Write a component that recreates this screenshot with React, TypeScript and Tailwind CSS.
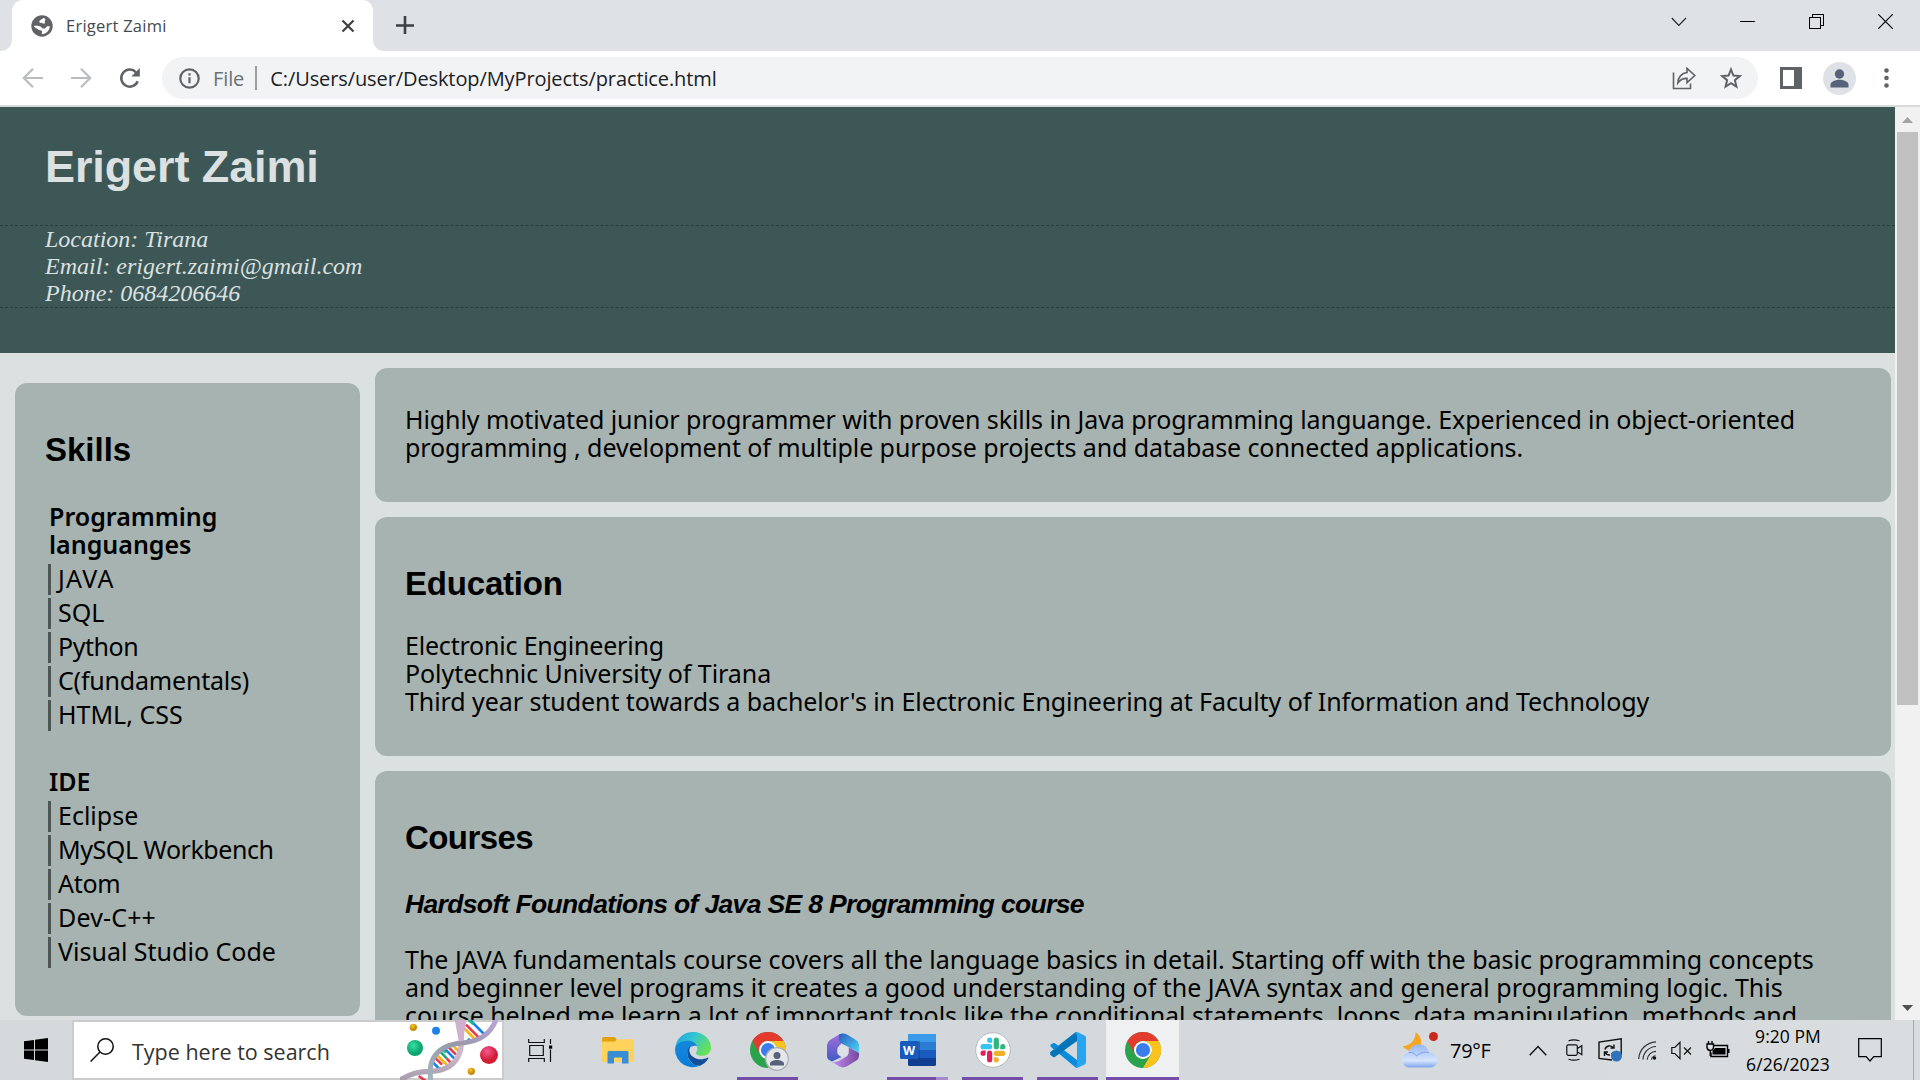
import type { ReactNode } from "react";

function GlobeIcon() {
  return (
    <svg className="h-[22px] w-[22px] shrink-0" viewBox="0 0 22 22">
      <circle cx="11" cy="11" r="10.7" fill="#5f6368" />
      <path
        d="M2.800 10.800c2.800-.3 5.200-.2 6.700.7 1.300.8 1.300 2 2.700 2.100 1.300 0 2.200-.2 2.700-1.200.4-1 1.700-1.300 4-1.100A8.200 8.200 0 0 1 11 19.200c-.6-1.700.8-2-.1-3.200-.8-1.100-2.700-.3-3.700-1.500-.9-1.300-3.200-1-4.400-3.700Z"
        fill="#fff"
      />
      <path d="M13 3c-1.500.1-1.800 1.300-3.100 1.700-1.400.5-1.900 1.800-1.300 2.700.7.9 2.100.2 3 .9.700.6 1.600.7 2.100-.1.500-.9-.3-1.600.4-2.400.5-.7.6-2-1.100-2.800Z" fill="#fff" />
    </svg>
  );
}

function Tab() {
  return (
    <div className="flex h-[51px] shrink-0 items-end">
      <div className="h-[51px] w-3 bg-white">
        <div className="h-full w-full rounded-br-[11px] bg-[#dee1e6]" />
      </div>
      <div className="flex h-[51px] w-[361px] items-center rounded-t-[11px] bg-white pl-[19px] pr-[17px]">
        <GlobeIcon />
        <span className="ml-[13px] grow font-['Open_Sans','Noto_Sans',sans-serif] text-[16.500px] leading-[22px] tracking-[0.24px] text-[#45484d]">
          Erigert Zaimi
        </span>
        <svg className="h-4 w-4" viewBox="0 0 16 16" stroke="#3c4043" strokeWidth="2.200">
          <path d="M2.500 2.500l11 11M13.500 2.500l-11 11" />
        </svg>
      </div>
      <div className="h-[51px] w-3 bg-white">
        <div className="h-full w-full rounded-bl-[11px] bg-[#dee1e6]" />
      </div>
    </div>
  );
}

function TabStrip() {
  return (
    <div className="flex h-[51px] shrink-0 bg-[#dee1e6]">
      <Tab />
      <svg className="ml-[11px] mt-4 h-[18px] w-[18px]" viewBox="0 0 18 18" stroke="#3c4043" strokeWidth="2.600">
        <path d="M9 0v18M0 9.500h18" />
      </svg>
      <div className="ml-auto flex h-[43px] items-center">
        <svg className="mr-[53px] h-[10px] w-4" viewBox="0 0 16 10" fill="none" stroke="#222" strokeWidth="1.100">
          <path d="M.8 1l7 7.500L15 1" />
        </svg>
        <svg className="mr-[54px] h-[15px] w-[15px]" viewBox="0 0 15 15" shapeRendering="crispEdges">
          <path d="M0 7h15v1H0z" />
        </svg>
        <svg className="mr-[54px] h-[15px] w-[15px]" viewBox="0 0 15 15" fill="none" stroke="#000" shapeRendering="crispEdges">
          <path d="M.5 3.500h11v11H.5zM3.500 3.500V.5h11v11h-3" />
        </svg>
        <svg className="mr-[27px] h-[15px] w-[15px]" viewBox="0 0 15 15" stroke="#000" strokeWidth="1.200">
          <path d="M0 0l15 15M15 0L0 15" />
        </svg>
      </div>
    </div>
  );
}

function Toolbar() {
  return (
    <div className="flex h-[56px] shrink-0 items-center border-b-2 border-[#d9dadc] bg-white pl-[22px]">
      <svg className="h-5 w-[22px]" viewBox="0 0 22 20" fill="none" stroke="#babcbe" strokeWidth="2.200">
        <path d="M21 10H2.500M11 .8L1.800 10l9.200 9.200" />
      </svg>
      <svg className="ml-[27px] h-5 w-[22px]" viewBox="0 0 22 20" fill="none" stroke="#babcbe" strokeWidth="2.200">
        <path d="M0 10h18.500M10 .8l9.200 9.200-9.200 9.200" />
      </svg>
      <svg className="ml-[26px] h-[22px] w-[22px]" viewBox="0 0 22 22" fill="none" stroke="#5f6368" strokeWidth="2.500">
        <path d="M18.700 14.200A8.500 8.500 0 1 1 17 5.300" />
        <path d="M20.800 1v8.500h-8.500z" fill="#5f6368" stroke="none" />
      </svg>
      <div className="ml-[21px] flex h-[42px] w-[1596px] items-center rounded-full bg-[#f1f3f4] font-['Open_Sans','Noto_Sans',sans-serif] text-[20px]">
        <svg className="ml-[17px] h-[21px] w-[21px]" viewBox="0 0 21 21" fill="none" stroke="#5f6368" strokeWidth="2.200">
          <circle cx="10.500" cy="10.500" r="9.200" />
          <path d="M10.500 9.300v6M10.500 5.300v2.200" />
        </svg>
        <span className="ml-[13px] pt-[2px] tracking-[-0.1px] text-[#6c7074]">File</span>
        <div className="ml-[11px] h-6 w-[2px] bg-[#9a9da1]" />
        <span className="ml-[13px] pt-[2px] tracking-[-0.1px] text-[#202124]">C:/Users/user/Desktop/MyProjects/practice.html</span>
        <svg className="ml-auto h-[23px] w-6" viewBox="0 0 24 23" fill="none" stroke="#5f6368" strokeWidth="1.600">
          <path d="M1.500 5.500v16h17v-5" />
          <path d="M15 1.300l7.800 7.200-7.800 7.200v-4.300C10.500 11.300 8 12.800 5.800 16 6 10.500 9.500 6 15 5.500z" />
        </svg>
        <svg className="ml-6 mr-4 h-[22px] w-[22px]" viewBox="0 0 22 22" fill="none" stroke="#5f6368" strokeWidth="2">
          <path d="M11 2.500l2.400 6 6.400.5-4.900 4.200 1.500 6.300-5.400-3.400-5.400 3.400 1.500-6.300L2.200 9l6.400-.5z" />
        </svg>
      </div>
      <svg className="ml-[22px] h-[22px] w-[22px]" viewBox="0 0 22 22" shapeRendering="crispEdges">
        <path fill="#5f6368" d="M0 0h22v22H0z" />
        <path fill="#fff" d="M3 3h11v16H3z" />
      </svg>
      <svg className="ml-[21px] h-[33px] w-[33px]" viewBox="0 0 33 33">
        <circle cx="16.500" cy="16.500" r="16.500" fill="#dee1e6" />
        <circle cx="16.500" cy="12" r="4.700" fill="#56627a" />
        <path d="M7.500 25.500v-2.800c0-3.200 5.500-5 9-5s9 1.800 9 5v2.800z" fill="#56627a" />
      </svg>
      <svg className="ml-[28px] h-[20px] w-[5px]" viewBox="0 0 5 20" fill="#5f6368">
        <circle cx="2.500" cy="2.500" r="2.300" />
        <circle cx="2.500" cy="10" r="2.300" />
        <circle cx="2.500" cy="17.500" r="2.300" />
      </svg>
    </div>
  );
}

function Header() {
  return (
    <header className="flex h-[246px] shrink-0 flex-col bg-[#3d5757] text-[#dbe0e0]">
      <h1 className="ml-[45px] mt-[35px] h-[83px] font-['Liberation_Sans',sans-serif] text-[45px] font-bold leading-[50px] tracking-[-0.1px]">
        Erigert Zaimi
      </h1>
      <address className="border-y border-dashed border-[#263f41] pl-[45px] font-['Liberation_Serif',serif] text-[24px] leading-[27px]">
        <p>Location: Tirana</p>
        <p>Email: erigert.zaimi@gmail.com</p>
        <p>Phone: 0684206646</p>
      </address>
    </header>
  );
}

function SkillGroup({ title, children }: { title: ReactNode; children: ReactNode }) {
  return (
    <div>
      <h3 className="ml-[4px] font-semibold leading-7">{title}</h3>
      <ul className="ml-[3px] mt-[6px] flex flex-col gap-[3px]">{children}</ul>
    </div>
  );
}

function Skill({ children, className = "" }: { children: ReactNode; className?: string }) {
  return (
    <li className={`h-[31px] border-l-[3px] border-[#4e5555] pl-[7px] leading-7 ${className}`}>{children}</li>
  );
}

function Sidebar() {
  return (
    <aside className="ml-[15px] mt-[30px] h-[633px] w-[345px] shrink-0 rounded-xl bg-[#a7b3b0] pl-[30px] pt-[49px]">
      <h2 className="font-['Liberation_Sans',sans-serif] text-[33px] font-bold leading-9">Skills</h2>
      <div className="mt-[34px] flex flex-col gap-9">
        <SkillGroup
          title={
            <>
              Programming
              <br />
              languanges
            </>
          }
        >
          <Skill className="tracking-[1.2px]">JAVA</Skill>
          <Skill>SQL</Skill>
          <Skill className="tracking-[-0.45px]">Python</Skill>
          <Skill className="tracking-[-0.2px]">C(fundamentals)</Skill>
          <Skill>HTML, CSS</Skill>
        </SkillGroup>
        <SkillGroup title="IDE">
          <Skill>Eclipse</Skill>
          <Skill className="tracking-[-0.45px]">MySQL Workbench</Skill>
          <Skill className="tracking-[-0.3px]">Atom</Skill>
          <Skill className="tracking-[0.15px]">Dev-C++</Skill>
          <Skill>Visual Studio Code</Skill>
        </SkillGroup>
      </div>
    </aside>
  );
}

function MainColumn() {
  return (
    <main className="ml-[15px] mt-[15px] flex w-[1516px] flex-col gap-[15px] whitespace-nowrap leading-7">
      <section className="h-[134px] rounded-xl bg-[#a7b3b0] pl-[30px] pt-[37px] tracking-[-0.085px]">
        <p>
          Highly motivated junior programmer with proven skills in Java programming languange. Experienced in object-oriented
          <br />
          programming , development of multiple purpose projects and database connected applications.
        </p>
      </section>
      <section className="h-[239px] rounded-xl bg-[#a7b3b0] pl-[30px] pt-[49px]">
        <h2 className="font-['Liberation_Sans',sans-serif] text-[33px] font-bold leading-9 tracking-[-0.2px]">Education</h2>
        <p className="mt-[29px] tracking-[-0.2px]">Electronic Engineering</p>
        <p className="tracking-[-0.07px]">Polytechnic University of Tirana</p>
        <p className="tracking-[-0.065px]">Third year student towards a bachelor's in Electronic Engineering at Faculty of Information and Technology</p>
      </section>
      <section className="h-[420px] rounded-xl bg-[#a7b3b0] pl-[30px] pt-[49px]">
        <h2 className="font-['Liberation_Sans',sans-serif] text-[33px] font-bold leading-9 tracking-[-0.58px]">Courses</h2>
        <h3 className="mt-[33px] font-['Liberation_Sans',sans-serif] text-[26.500px] font-bold italic leading-[30px] tracking-[-0.65px]">
          Hardsoft Foundations of Java SE 8 Programming course
        </h3>
        <p className="mt-[26px]">
          The JAVA fundamentals course covers all the language basics in detail. Starting off with the basic programming concepts
          <br />
          and beginner level programs it creates a good understanding of the JAVA syntax and general programming logic. This
        </p>
        <p className="tracking-[-0.04px]">
          course helped me learn a lot of important tools like the conditional statements, loops, data manipulation, methods and
        </p>
      </section>
    </main>
  );
}

function Scrollbar() {
  return (
    <div className="flex w-[25px] shrink-0 flex-col items-center bg-[#f1f1f1]">
      <svg className="mt-[10px] h-[6px] w-[11px]" viewBox="0 0 11 6" fill="#a3a3a3">
        <path d="M5.500 0L11 6H0z" />
      </svg>
      <div className="mt-[9px] h-[573px] w-[21px] bg-[#c1c1c1]" />
      <svg className="mb-[9px] mt-auto h-[6px] w-[11px]" viewBox="0 0 11 6" fill="#505050">
        <path d="M5.500 6L11 0H0z" />
      </svg>
    </div>
  );
}

function DnaArt() {
  return (
    <svg className="-my-[2px] h-[60px] w-[102px] shrink-0" viewBox="0 12 306 180">
      <defs>
        <linearGradient id="strandA" x1="0" y1="1" x2="1" y2="0">
          <stop offset="0" stopColor="#a3b5be" />
          <stop offset=".5" stopColor="#9798a8" />
          <stop offset="1" stopColor="#b8a4d6" />
        </linearGradient>
        <linearGradient id="strandB" x1="0" y1="0" x2="0" y2="1">
          <stop offset="0" stopColor="#cdaccd" />
          <stop offset=".6" stopColor="#cbbaca" />
          <stop offset="1" stopColor="#a79cae" />
        </linearGradient>
        <radialGradient id="greenBall" cx=".4" cy=".35">
          <stop offset="0" stopColor="#33e0a5" />
          <stop offset="1" stopColor="#0ea56f" />
        </radialGradient>
        <radialGradient id="redBall" cx=".4" cy=".3">
          <stop offset="0" stopColor="#f45a94" />
          <stop offset="1" stopColor="#d31d35" />
        </radialGradient>
        <radialGradient id="goldBall" cx=".4" cy=".3">
          <stop offset="0" stopColor="#fbc62d" />
          <stop offset="1" stopColor="#c58c08" />
        </radialGradient>
      </defs>
      <g strokeWidth="8" fill="none">
        <path stroke="#19a974" d="M118 104l22 23" />
        <path stroke="#e8384f" d="M140 127l14 15M144 92l24 24M104 124l22 22M198 26l18 18M216 44l26 26M56 180l20 14" />
        <path stroke="#1780ee" d="M100 140l18 19M134 98l32 33M212 14l46 46M204 68l10 10" />
        <path stroke="#f6b60c" d="M108 114l44 44M162 92l16 16M192 36l36 37" />
        <path stroke="#19b686" d="M128 100l10 10M206 12l14 12" />
      </g>
      <path d="M181 12c2 35 7 65 0 92-12 42-45 60-90 62-36 0-58 7-91 26" fill="none" stroke="url(#strandB)" strokeWidth="16" />
      <path d="M288 12c-18 43-48 62-95 68-49 3-79 20-93 47-11 18-11 37-8 65" fill="none" stroke="url(#strandA)" strokeWidth="15" />
      <path d="M164 12h35l-10 62-12 3z" fill="#cfb0cf" />
      <circle cx="40" cy="34" r="11" fill="url(#goldBall)" />
      <circle cx="108" cy="44" r="12" fill="#1f82e8" />
      <circle cx="45" cy="96" r="24" fill="url(#greenBall)" />
      <circle cx="267" cy="117" r="27" fill="url(#redBall)" />
      <circle cx="214" cy="166" r="11" fill="url(#goldBall)" />
    </svg>
  );
}

function ChromeLogo() {
  return (
    <svg className="h-9 w-9" viewBox="0 0 36 36">
      <circle cx="18" cy="18" r="18" fill="#2ba24c" />
      <path d="M18 0a18 18 0 0 1 15.590 9H18a9 9 0 0 0-7.790 13.500L2.410 9A18 18 0 0 1 18 0Z" fill="#e33b2e" />
      <path d="M33.590 9A18 18 0 0 1 18 36l7.790-13.500A9 9 0 0 0 18 9Z" fill="#fcc31e" />
      <circle cx="18" cy="18" r="9" fill="#fff" />
      <circle cx="18" cy="18" r="7.100" fill="#3b7ded" />
    </svg>
  );
}

function TaskCell({ children, width = "w-[61px]", active = false }: { children: ReactNode; width?: string; active?: boolean }) {
  return (
    <div className="flex h-full w-[75px] shrink-0 flex-col items-center">
      <div className={`flex h-[57px] items-center justify-center pt-[3px] ${active ? "w-[73px] bg-[#eef0f2]" : "w-full"}`}>{children}</div>
      <div className={`h-[3px] bg-[#744da9] ${width}`} />
    </div>
  );
}

function TaskIcons() {
  return (
    <div className="flex h-full">
      <div className="flex h-full w-[76px] items-center justify-center pr-[4px]">
        <svg className="h-[23px] w-[25px]" viewBox="0 0 25 23" fill="none" stroke="#111" strokeWidth="1.200">
          <path d="M.7 0v3.500h15.600V0M.7 23v-3.500h15.600V23M1.700 6.500h13.600v10H1.700zM22.500 0v5M22.500 10.500V23" />
          <path d="M21 6.500h3.200v3.200H21z" fill="#000" stroke="none" />
        </svg>
      </div>
      <TaskCell width="w-0">
        <svg className="h-7 w-8" viewBox="0 0 32 28">
          <path d="M0 2.500Q0 1 1.500 1H12q1.500 0 2 1.500L15.500 6H0z" fill="#e3a20b" />
          <path d="M0 5.500h13l2.500-2.300H30.500q1.500 0 1.500 1.500v20q0 1.300-1.500 1.300h-29Q0 26 0 24.500z" fill="#ffd25b" />
          <path d="M5.500 27.500V16.500q0-1.500 1.500-1.500h18q1.500 0 1.500 1.500v11H20v-6h-8v6z" fill="#398dd5" />
        </svg>
      </TaskCell>
      <TaskCell width="w-0">
        <svg className="h-9 w-9" viewBox="0 0 36 36">
          <defs>
            <linearGradient id="edgeTop" x1="0" y1="0" x2="1" y2=".5">
              <stop offset="0" stopColor="#1f9fe0" />
              <stop offset=".5" stopColor="#31c5d3" />
              <stop offset="1" stopColor="#66e158" />
            </linearGradient>
            <linearGradient id="edgeLeft" x1="0" y1="0" x2=".3" y2="1">
              <stop offset="0" stopColor="#1789d8" />
              <stop offset="1" stopColor="#0a7ddb" />
            </linearGradient>
          </defs>
          <path d="M.2 16C1.200 6 9 0 18 0c10.500 0 18 7.300 18 15.500 0 5-3.900 8.300-8.800 8.300-4.500 0-6.200-1.700-6.200-2.800 0-.8 1.400-1.500 1.400-4.200 0-3.700-4-7.300-10-7.300C6.500 9.500 1.500 12.500.2 16Z" fill="url(#edgeTop)" />
          <path d="M0 18C0 12 6 8.700 12.200 8.700c5 0 8.500 2 10 5.300-5-1.600-9.700 2.200-9.700 7.500 0 7 5.500 12 12.500 12.300A18 18 0 0 1 0 18Z" fill="url(#edgeLeft)" />
          <path d="M15.400 14.300c-2.700 2.200-3.400 5-2.900 8.200.8 6.500 6.500 11.400 12.500 11.300 3-1.300 6.500-4 8.300-7.300.4-.9-.2-1.100-.9-.7-8.300 3.900-16.900-.6-17.900-6.100-.3-2 .1-3.700.9-5.400Z" fill="#114f9b" />
        </svg>
      </TaskCell>
      <TaskCell>
        <div className="relative">
          <ChromeLogo />
          <svg className="absolute left-[15px] top-[15px] h-6 w-6" viewBox="0 0 24 24">
            <circle cx="12" cy="12" r="11.300" fill="#e4e6ea" stroke="#a9adb3" strokeWidth="1.200" />
            <circle cx="12" cy="8.500" r="3.500" fill="#56627a" />
            <path d="M5 18.500v-2c0-2.300 4.200-3.600 7-3.600s7 1.300 7 3.600v2z" fill="#56627a" />
          </svg>
        </div>
      </TaskCell>
      <TaskCell width="w-0">
        <svg className="h-[35px] w-8" viewBox="0 0 32 35">
          <defs>
            <linearGradient id="officeLeft" x1="0" y1="0" x2="0" y2="1">
              <stop offset="0" stopColor="#a46ed6" />
              <stop offset="1" stopColor="#3f5bc7" />
            </linearGradient>
            <linearGradient id="officeTop" x1="0" y1="0" x2="1" y2="1">
              <stop offset="0" stopColor="#2b5bc0" />
              <stop offset="1" stopColor="#4bd9f5" />
            </linearGradient>
            <linearGradient id="officeBottom" x1="0" y1="0" x2="1" y2="0">
              <stop offset="0" stopColor="#c58cf2" />
              <stop offset="1" stopColor="#73489f" />
            </linearGradient>
          </defs>
          <path d="M12 1.500L3 7Q0 9 0 12v11q0 3 3 4.500l2 1 9.500-4.500q-4-1.500-4-6.500Q10.500 13 14 11V1z" fill="url(#officeLeft)" />
          <path d="M12 1.500q4-2.200 8 0L29 7q3 2 3 5v8l-10.500-6-6-3Q11 10 12 1.500z" fill="url(#officeTop)" />
          <path d="M32 20v3q0 3-3 4.800l-9 5.500q-4 2.200-8 0l-7-4.500q5 1.200 9-2l6-3.500q2-2 1.500-9z" fill="url(#officeBottom)" />
          <path d="M16 11.500l5.500 3.200v6L16 24l-5.500-3.200v-6z" fill="#dde1e6" />
        </svg>
      </TaskCell>
      <div className="flex h-full w-[75px] shrink-0 flex-col items-center">
        <div className="flex h-[57px] items-center pt-[3px]">
          <svg className="h-8 w-9" viewBox="0 0 36 32">
            <rect x="8" width="28" height="32" rx="1.500" fill="#103f91" />
            <path d="M8 16h28v8H8z" fill="#185abd" />
            <path d="M8 8h28v8H8z" fill="#2b7cd3" />
            <path d="M8 8V1.500Q8 0 9.500 0h25Q36 0 36 1.500V8z" fill="#3c9be8" />
            <path d="M8 7h12v19H8z" fill="#123f7b" opacity=".4" />
            <rect y="7" width="18" height="18" rx="1.500" fill="#185abd" />
            <text x="9" y="20.500" textAnchor="middle" fontSize="12.500" fontWeight="700" fontFamily="Open Sans" fill="#fff">W</text>
          </svg>
        </div>
        <div className="flex h-[3px] w-[61px]">
          <div className="w-[49px] bg-[#744da9]" />
          <div className="w-3 bg-[#a78ccb]" />
        </div>
      </div>
      <TaskCell>
        <svg className="h-9 w-9" viewBox="0 0 36 36">
          <circle cx="18" cy="18" r="17.300" fill="#fff" stroke="#b7babd" strokeWidth="1" />
          <g transform="translate(5.500 5.500) scale(1.040)">
            <path d="M5 15.100a2.500 2.500 0 1 1-2.500-2.500H5zm1.300 0a2.500 2.500 0 0 1 5 0v6.300a2.500 2.500 0 0 1-5 0z" fill="#e01e5a" />
            <path d="M8.800 5a2.500 2.500 0 1 1 2.500-2.500V5zm0 1.300a2.500 2.500 0 0 1 0 5H2.500a2.500 2.500 0 0 1 0-5z" fill="#36c5f0" />
            <path d="M19 8.800a2.500 2.500 0 1 1 2.500 2.500H19zm-1.300 0a2.500 2.500 0 0 1-5 0V2.500a2.500 2.500 0 0 1 5 0z" fill="#2eb67d" />
            <path d="M15.200 19a2.500 2.500 0 1 1-2.500 2.500V19zm0-1.300a2.500 2.500 0 0 1 0-5h6.300a2.500 2.500 0 0 1 0 5z" fill="#ecb22e" />
          </g>
        </svg>
      </TaskCell>
      <TaskCell>
        <svg className="h-9 w-9" viewBox="0 0 36 36">
          <path d="M27 0L8.500 17 2.800 22.700 0 21.400Q-.3 20.700.3 20L25 .5z" fill="#0479c4" />
          <path d="M1.500 12L3.700 11Q4.500 10.700 5 11.200L27 28v8q-1 0-2-1L1 15Q-.4 13.500 1.500 12z" fill="#0c8bdc" />
          <path d="M1 23.500Q-.5 22 1 21L27 0V9L4.800 25Q4 25.500 3.200 25z" fill="#0675b8" />
          <path d="M25.500 35.500Q27 34.500 27 32V4Q27 1.500 25.500.4q1-.6 2.200-.1L35 3.700q1 .5 1 1.700v25.200q0 1.200-1 1.700l-7.300 3.500q-1.200.4-2.200-.3z" fill="#27a5f1" />
        </svg>
      </TaskCell>
      <TaskCell width="w-[73px]" active>
        <ChromeLogo />
      </TaskCell>
    </div>
  );
}

function Tray() {
  return (
    <div className="ml-auto flex h-full items-center font-['Open_Sans','Noto_Sans',sans-serif] text-black">
      <svg className="h-9 w-9" viewBox="0 0 36 36">
        <defs>
          <linearGradient id="cloud" x1="0" y1="0" x2="0" y2="1">
            <stop offset="0" stopColor="#94b8f2" />
            <stop offset=".7" stopColor="#d6e5fd" />
            <stop offset="1" stopColor="#7fa4ee" />
          </linearGradient>
        </defs>
        <path d="M13.500 0c6 4 7.500 11 3.500 16-4 4.500-12 4-16.500-2C8 14 14 8 13.500 0z" fill="#f6a623" />
        <path d="M8 35.500a7.500 7.500 0 0 1-1-15C8 15 12 12.500 17 12.500c5.500 0 9 3.500 10 8 5 0 8.500 3.300 8.500 7.500s-3.200 7.500-7.500 7.500z" fill="url(#cloud)" />
        <path d="M6.500 20.600c4-.6 6.500 1 8 3.400 3-3 7.500-4.500 12.500-3.500" fill="none" stroke="#7ba3e8" />
        <circle cx="31.500" cy="4.500" r="4.500" fill="#c9281c" />
      </svg>
      <span className="ml-3 w-[79px] pt-[2px] text-[20px] tracking-[-0.3px]">79°F</span>
      <svg className="h-[11px] w-[18px]" viewBox="0 0 18 11" fill="none" stroke="#111" strokeWidth="1.400">
        <path d="M.7 10.200L9 1.500l8.300 8.700" />
      </svg>
      <svg className="ml-[19px] h-[22px] w-[17px]" viewBox="0 0 17 22" fill="none" stroke="#111" strokeWidth="1.200">
        <rect x=".8" y="5.800" width="10.500" height="10.500" rx="1.500" />
        <path d="M11.500 9.500l4.300-2.800v9l-4.300-2.800M2.500 1.800q5-2 11 0M2.500 20.200q5 2 11 0" />
      </svg>
      <svg className="ml-[15px] h-6 w-6" viewBox="0 0 24 24" fill="none" stroke="#111" strokeWidth="1.400">
        <path d="M14 22L1 20.500V4L23.200.8V17M7 11.500c.8-4 6.500-5 8.500-1.500M16 6.500V10h-3.500M15.500 14q-.5 1-2 2M6.500 18v-4H10M7 14.500q2 3 5 2.500" />
        <circle cx="18.500" cy="18" r="5.500" fill="#2f72bb" stroke="none" />
      </svg>
      <svg className="ml-4 h-[19px] w-[19px]" viewBox="0 0 19 19" fill="none" stroke="#111" strokeWidth="1.200">
        <path d="M.7 18A18 18 0 0 1 18 .8M5 18.500A13.500 13.500 0 0 1 18 5.500M9.200 18.800A9 9 0 0 1 18 10.300" stroke="#333" />
        <path d="M13.500 18.800q.3-3.500 4-4.300" stroke="#444" />
        <circle cx="16.500" cy="17" r="1.700" fill="#111" stroke="none" />
      </svg>
      <svg className="ml-[14px] h-[19px] w-[21px]" viewBox="0 0 21 19" fill="none" stroke="#111" strokeWidth="1.200">
        <path d="M.8 6.500h3L9 1.300v16.400l-5.200-5.200h-3zM13 6.500l7 7M20 6.500l-7 7" />
      </svg>
      <svg className="ml-[14px] h-[18px] w-6" viewBox="0 0 24 18" fill="none" stroke="#000" strokeWidth="1.400">
        <path d="M8 4.500h13.500v11H5v-4M22.800 8v4" />
        <path d="M9 7h10.500v6.500H6.500V10z" fill="#000" stroke="none" />
        <path d="M1 3h6.500v3.500q-.5 3-3.200 3T1 6.500zM2.500 0v3M6 0v3M4.300 9v6" fill="#dfe3e6" />
      </svg>
      <div className="ml-[16px] flex w-[84px] flex-col items-center whitespace-nowrap text-[17.500px] leading-[28px]">
        <span className="tracking-[0.05px]">9:20 PM</span>
        <span className="tracking-[0.1px]">6/26/2023</span>
      </div>
      <svg className="ml-7 h-6 w-6" viewBox="0 0 24 24" fill="none" stroke="#000" strokeWidth="1.200">
        <path d="M.7.7h22.600v18h-7.500L12 23l-3.800-4.300H.7z" />
      </svg>
      <div className="ml-[31px] h-full w-[7px] border-l border-[#a4a9ac]" />
    </div>
  );
}

function Taskbar() {
  return (
    <footer className="flex h-[60px] shrink-0 bg-linear-to-r from-[#d5d9db] via-[#d3d8dd] to-[#d9dddf]">
      <div className="flex w-[72px] items-center justify-center">
        <svg className="h-6 w-6" viewBox="0 0 24 24">
          <path d="M0 3.300L10 2v9.500H0zM11 1.800L24 0v11.500H11zM0 12.500h10V22L0 20.700zM11 12.500h13V24l-13-1.800z" />
        </svg>
      </div>
      <div className="flex w-[432px] items-center border-2 border-[#cccccc] bg-white">
        <svg className="ml-4 h-6 w-6 shrink-0" viewBox="0 0 24 24" fill="none" stroke="#111" strokeWidth="1.500">
          <circle cx="15.500" cy="8.500" r="7.700" />
          <path d="M10 14L.6 23.500" />
        </svg>
        <span className="ml-[18px] grow whitespace-nowrap pt-[3px] font-['Open_Sans','Noto_Sans',sans-serif] text-[21.500px] leading-7 text-[#333]">
          Type here to search
        </span>
        <DnaArt />
      </div>
      <TaskIcons />
      <Tray />
    </footer>
  );
}

export default function App() {
  return (
    <div className="flex h-[1080px] w-[1920px] flex-col overflow-hidden">
      <TabStrip />
      <Toolbar />
      <div className="flex h-[913px] shrink-0">
        <div className="flex h-full w-[1895px] shrink-0 flex-col overflow-hidden bg-[#dbe1e1] font-['Noto_Sans',sans-serif] text-[25px] text-black">
          <Header />
          <div className="flex items-start">
            <Sidebar />
            <MainColumn />
          </div>
        </div>
        <Scrollbar />
      </div>
      <Taskbar />
    </div>
  );
}
